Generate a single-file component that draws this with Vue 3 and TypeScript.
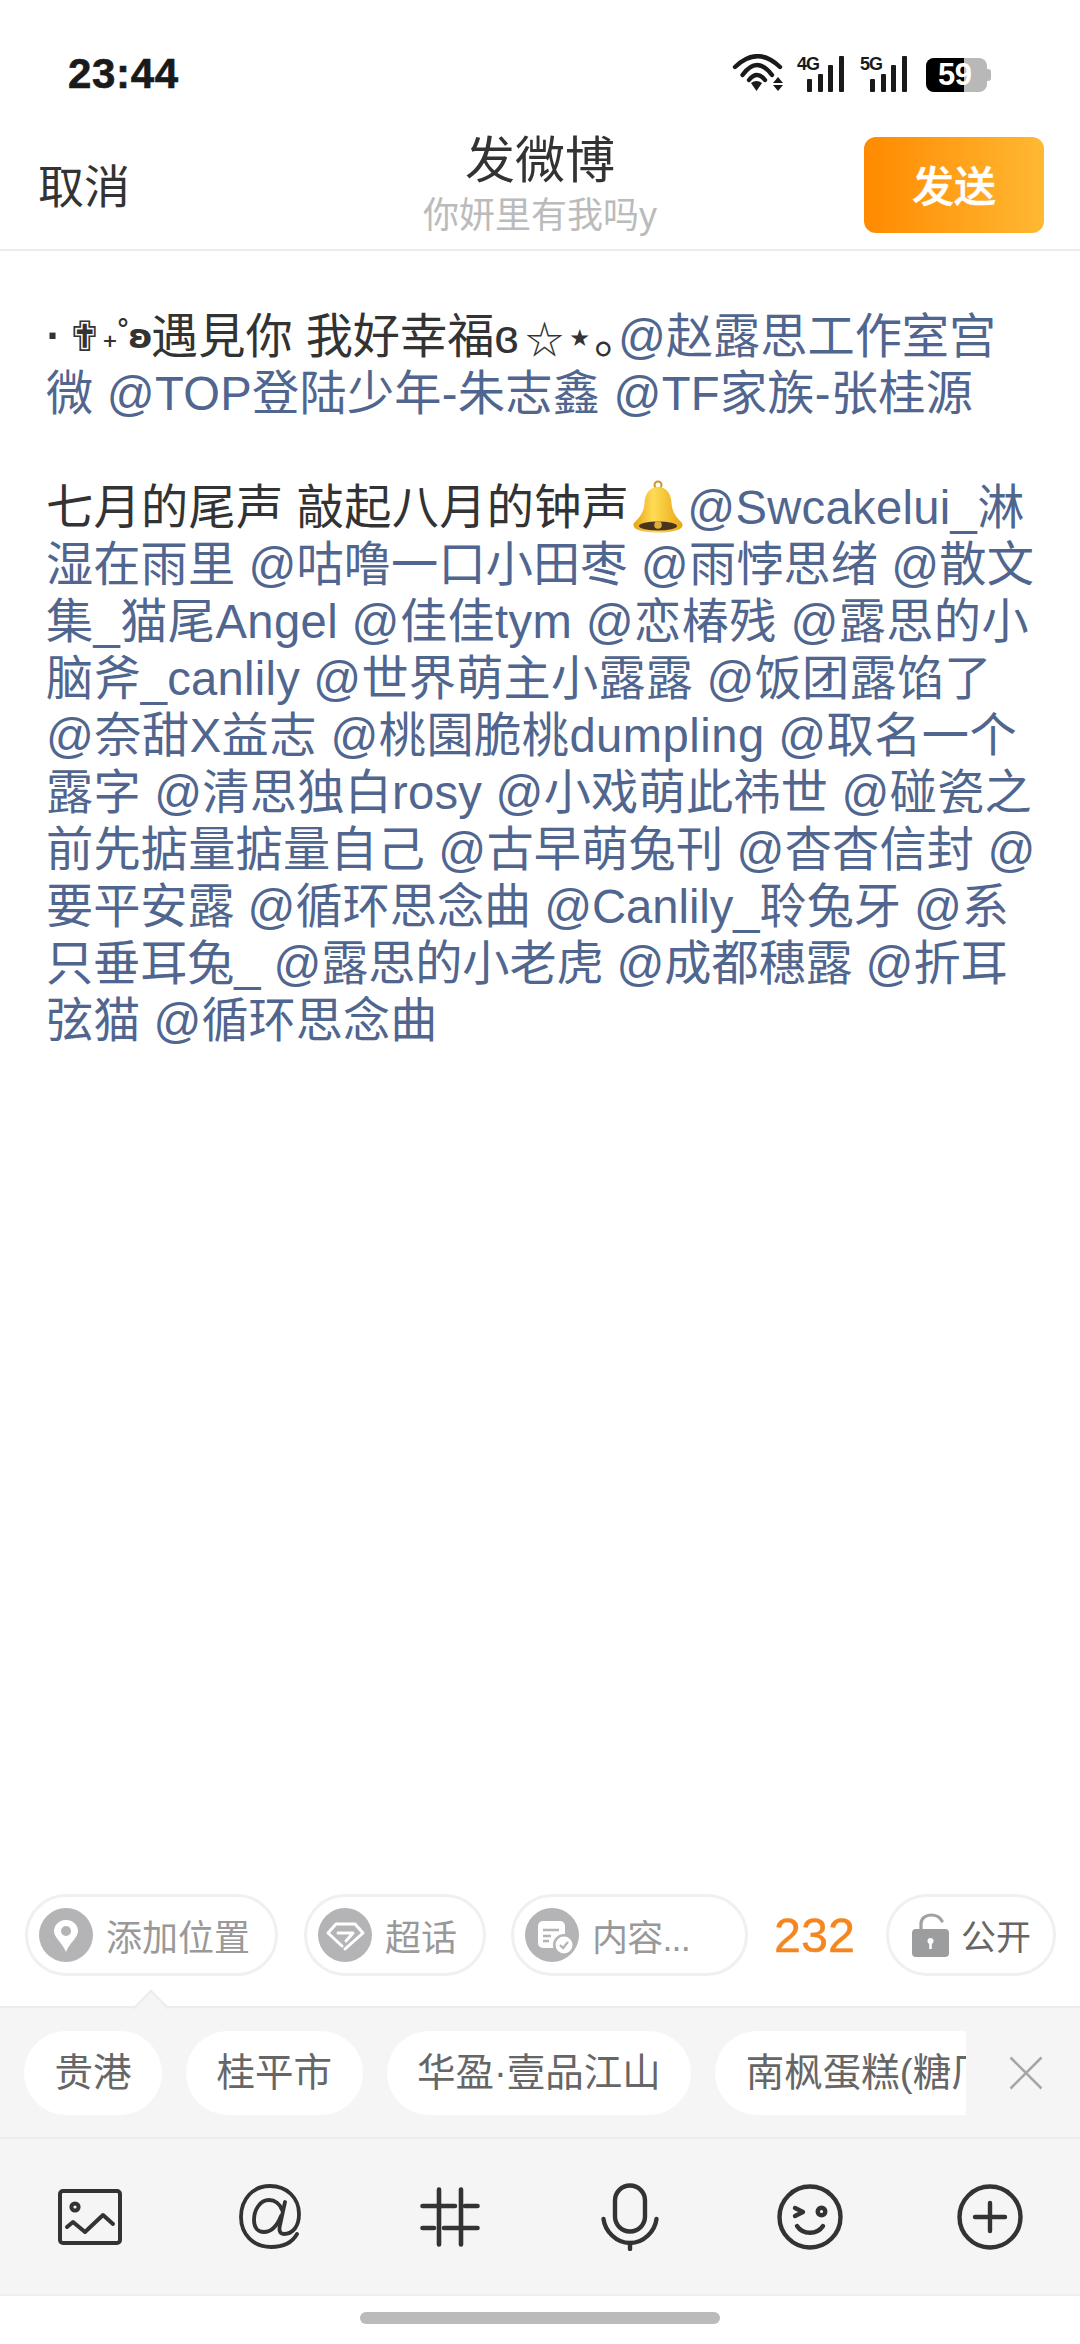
<script setup lang="ts">
type Seg = { text: string; link?: boolean; bell?: boolean };
type Line = { segs: Seg[]; track?: number };

const link = (text: string): Seg => ({ text, link: true });
const plain = (text: string): Seg => ({ text });

// the decorated opening of the post, each glyph has its own box
const deco = [
  { text: "·", cls: "d-dot" },
  { text: "✟", cls: "d-cross" },
  { text: "₊", cls: "d-plus" },
  { text: "˚", cls: "d-ring" },
  { text: "ʚ", cls: "d-wing" },
];

const lines: Line[] = [
  { segs: [plain("遇見你 我好幸福ɞ"), { text: "☆" }, plain("⋆｡"), link("@赵露思工作室宫")] },
  { segs: [link("微 @TOP登陆少年-朱志鑫 @TF家族-张桂源")], track: 0.27 },
  { segs: [] },
  { segs: [plain("七月的尾声 敲起八月的钟声"), { text: "", bell: true }, link("@Swcakelui_淋")], track: 0.3 },
  { segs: [link("湿在雨里 @咕噜一口小田枣 @雨悖思绪 @散文")], track: 0.12 },
  { segs: [link("集_猫尾Angel @佳佳tym @恋椿残 @露思的小")], track: 0.4 },
  { segs: [link("脑斧_canlily @世界萌主小露露 @饭团露馅了")], track: 0.22 },
  { segs: [link("@奈甜X益志 @桃園脆桃dumpling @取名一个")], track: 0.46 },
  { segs: [link("露字 @清思独白rosy @小戏萌此祎世 @碰瓷之")], track: 0.24 },
  { segs: [link("前先掂量掂量自己 @古早萌兔刊 @杳杳信封 @")], track: 0.19 },
  { segs: [link("要平安露 @循环思念曲 @Canlily_聆兔牙 @系")], track: -0.05 },
  { segs: [link("只垂耳兔_ @露思的小老虎 @成都穗露 @折耳")], track: -0.12 },
  { segs: [link("弦猫 @循环思念曲")] },
];

const chips = ["贵港", "桂平市", "华盈·壹品江山", "南枫蛋糕(糖厂店)"];
const signalBars = [13, 18, 27, 36];
</script>

<template>
  <div class="screen">
    <div class="status">
      <span class="clock">23:44</span>
      <div class="status-icons">
        <svg class="wifi" width="52" height="38" viewBox="0 0 52 38">
          <g fill="none" stroke="#1a1a1a" stroke-width="4.400" stroke-linecap="round">
            <path d="M3 13 Q25.500 -8.600 48 13" />
            <path d="M10.500 21 Q25 1 40 21" />
            <path d="M17 26 Q25 16 33 26" />
          </g>
          <path d="M19 29 L24.500 37 L30 29 Q24.500 25 19 29 Z" fill="#1a1a1a" />
          <path d="M41 29 L46 23 L51 29 Z M41 31 H51 L46 37 Z" fill="#1a1a1a" />
        </svg>
        <div class="signal">
          <span class="net">4G</span>
          <i v-for="h in signalBars" :key="h" :style="{ height: h + 'px' }" />
        </div>
        <div class="signal">
          <span class="net">5G</span>
          <i v-for="h in signalBars" :key="h" :style="{ height: h + 'px' }" />
        </div>
        <div class="battery">
          <div class="battery-fill" />
          <span class="battery-num">59</span>
          <div class="battery-nub" />
        </div>
      </div>
    </div>

    <header class="header">
      <span class="cancel">取消</span>
      <div class="title">
        <div class="title-main">发微博</div>
        <div class="title-sub">你妍里有我吗y</div>
      </div>
      <button class="send">发送</button>
    </header>

    <main class="body">
      <div
        v-for="(line, i) in lines"
        :key="i"
        class="line"
        :style="line.track ? { letterSpacing: line.track + 'px' } : undefined"
      >
        <template v-if="i === 0">
          <span v-for="d in deco" :key="d.cls" class="deco" :class="d.cls">{{ d.text }}</span>
        </template>
        <template v-for="(seg, j) in line.segs" :key="j">
          <svg v-if="seg.bell" class="bell" width="52" height="53" viewBox="0 0 52 53">
            <defs>
              <linearGradient id="bellGold" x1="0" y1="0" x2="1" y2="0">
                <stop offset="0" stop-color="#e6a414" />
                <stop offset="0.4" stop-color="#ffdb55" />
                <stop offset="1" stop-color="#e9a612" />
              </linearGradient>
            </defs>
            <circle cx="26" cy="5" r="3.500" fill="none" stroke="#c9962a" stroke-width="2" />
            <path d="M26 7 C17 7 13 14 12.500 23 C12 32 8 37 2 43 C0 47 4 50 10 51 C20 53 32 53 42 51 C48 50 52 47 50 43 C44 37 40 32 39.500 23 C39 14 35 7 26 7 Z" fill="url(#bellGold)" />
            <ellipse cx="26" cy="46" rx="19" ry="4.500" fill="#4a3420" />
            <circle cx="26" cy="45" r="3.800" fill="#dcae3f" />
          </svg>
          <span v-else :class="{ mention: seg.link, star: seg.text === '☆' }">{{ seg.text }}</span>
        </template>
      </div>
    </main>

    <div class="meta">
      <div class="pill pill-loc">
        <span class="dot">
          <svg width="54" height="54" viewBox="0 0 54 54">
            <path d="M27 12 C19 12 15 18 15 23 C15 30 23 34 27 44 C31 34 39 30 39 23 C39 18 35 12 27 12 Z" fill="#fff" />
            <circle cx="27" cy="23" r="5" fill="#b4b4b6" />
          </svg>
        </span>
        <span>添加位置</span>
      </div>
      <div class="pill pill-topic">
        <span class="dot">
          <svg width="54" height="54" viewBox="0 0 54 54" fill="none" stroke="#fff" stroke-width="3" stroke-linejoin="round" stroke-linecap="round">
            <path d="M27 41 L45 25 L37 16 H18 L10 25 L24 38" />
            <path d="M20 25 H35 L28 33" />
          </svg>
        </span>
        <span>超话</span>
      </div>
      <div class="pill pill-content">
        <span class="dot">
          <svg width="54" height="54" viewBox="0 0 54 54">
            <rect x="13" y="13" width="27" height="27" rx="5" fill="#fff" />
            <path d="M18 22 H34 M18 28 H26 M18 33 H24" stroke="#b4b4b6" stroke-width="2.500" />
            <circle cx="39" cy="37" r="11" fill="#b4b4b6" />
            <circle cx="39" cy="37" r="8.500" fill="#fff" />
            <path d="M35 37 L38 40 L43 34" fill="none" stroke="#b4b4b6" stroke-width="2.200" />
          </svg>
        </span>
        <span class="content-label">内容...</span>
      </div>
      <span class="count">232</span>
      <div class="pill pill-public">
        <svg width="38" height="44" viewBox="0 0 38 44">
          <path d="M9 17 V11 C9 5 14 2 19 2 C24 2 28 4 30 8" fill="none" stroke="#a0a1a3" stroke-width="3.200" stroke-linecap="round" />
          <rect x="0" y="16" width="37" height="28" rx="4" fill="#9c9d9f" />
          <circle cx="18.500" cy="28" r="3" fill="#fff" />
          <rect x="17.200" y="29" width="2.600" height="7" fill="#fff" />
        </svg>
        <span>公开</span>
      </div>
    </div>

    <div class="suggest">
      <div class="caret" />
      <div class="chips">
        <span v-for="chip in chips" :key="chip" class="chip">{{ chip }}</span>
      </div>
      <svg class="close" width="34" height="34" viewBox="0 0 34 34">
        <path d="M1.500 1.500 L32.500 32.500 M32.500 1.500 L1.500 32.500" stroke="#a6a6a6" stroke-width="2.600" />
      </svg>
    </div>

    <nav class="toolbar">
      <div class="tool">
        <svg width="64" height="56" viewBox="0 0 64 56" fill="none" stroke="#333" stroke-width="4" stroke-linecap="round" stroke-linejoin="round">
          <rect x="2" y="2" width="60" height="52" rx="3" />
          <circle cx="17" cy="18" r="3.600" />
          <path d="M9 38 L15 33 L27 43 L45 26 L55 35" />
        </svg>
      </div>
      <div class="tool">
        <svg width="64" height="66" viewBox="0 0 64 66" fill="none" stroke="#333" stroke-width="3.800" stroke-linecap="round" stroke-linejoin="round">
          <path d="M59 50 C54 59 45 63 33 63 C15 63 3 50 3 33 C3 15 15 2 32 2 C49 2 61 14 61 30 C61 42 55 50 46 50 C41 50 41 45 42 41 L47 18" />
          <path d="M44 26 C42 20 37 16 31 16 C22 16 16 26 16 36 C16 44 20 48 26 48 C33 48 39 42 43 32" />
        </svg>
      </div>
      <div class="tool">
        <svg width="60" height="60" viewBox="0 0 60 60" fill="none" stroke="#333" stroke-width="4.600" stroke-linecap="round">
          <path d="M19 2.500 V57.500 M41 2.500 V57.500" />
          <path d="M2.500 19 H35 M45 19 H57.500 M2.500 41 H14 M24 41 H57.500" />
        </svg>
      </div>
      <div class="tool">
        <svg width="58" height="68" viewBox="0 0 58 68" fill="none" stroke="#333" stroke-width="4.400" stroke-linecap="round">
          <rect x="14" y="2.500" width="30" height="46" rx="15" />
          <path d="M2.500 36 C4 48 15 60 29 60 C43 60 54 48 55.500 36" />
          <path d="M29 60 V66" />
        </svg>
      </div>
      <div class="tool">
        <svg width="66" height="66" viewBox="0 0 66 66" fill="none" stroke="#333" stroke-width="4.400" stroke-linecap="round" stroke-linejoin="round">
          <circle cx="33" cy="33" r="30.500" />
          <path d="M18 24 L26 28 L18 32" />
          <circle cx="44.500" cy="27.500" r="3.800" />
          <path d="M20 42 C26 51 40 51 46 42" />
        </svg>
      </div>
      <div class="tool">
        <svg width="66" height="66" viewBox="0 0 66 66" fill="none" stroke="#333" stroke-width="4.400" stroke-linecap="round">
          <circle cx="33" cy="33" r="30.500" />
          <path d="M33 19 V47 M18 33 H48" />
        </svg>
      </div>
    </nav>

    <div class="home">
      <div class="home-bar" />
    </div>
  </div>
</template>

<style>
html,
body {
  margin: 0;
  background: #fff;
}
</style>

<style scoped>
.screen {
  width: 1080px;
  height: 2344px;
  display: flex;
  flex-direction: column;
  background: #fff;
  font-family: "Liberation Sans", "Noto Sans CJK SC", sans-serif;
  overflow: hidden;
}

.status {
  height: 125px;
  padding: 0 93px 0 68px;
  box-sizing: border-box;
  display: flex;
  justify-content: space-between;
  align-items: flex-start;
}
.clock {
  margin-top: 50px;
  font-size: 42px;
  line-height: 48px;
  font-weight: 700;
  letter-spacing: 0.700px;
  -webkit-text-stroke: 0.600px #1a1a1a;
  color: #1a1a1a;
}
.status-icons {
  margin-top: 54px;
  display: flex;
  align-items: flex-start;
}
.wifi {
  display: block;
}
.signal {
  position: relative;
  box-sizing: border-box;
  width: 48px;
  height: 38px;
  margin-left: 13px;
  padding-left: 10px;
  display: flex;
  align-items: flex-end;
  gap: 5.600px;
}
.signal + .signal {
  margin-left: 15px;
}
.signal i {
  display: block;
  flex: none;
  width: 5px;
  background: #1a1a1a;
  border-radius: 1px;
}
.net {
  position: absolute;
  left: 0;
  top: 2px;
  font-size: 18px;
  line-height: 16px;
  font-weight: 700;
  color: #1a1a1a;
  letter-spacing: -1px;
}
.battery {
  position: relative;
  width: 61px;
  height: 34px;
  margin-left: 18px;
  margin-top: 4px;
  background: #b8b8b8;
  border-radius: 8px;
}
.battery-fill {
  position: absolute;
  left: 0;
  top: 0;
  bottom: 0;
  width: 38px;
  background: #000;
  border-radius: 8px 0 0 8px;
}
.battery-num {
  position: absolute;
  left: 12px;
  top: 1px;
  font-size: 31px;
  line-height: 32px;
  font-weight: 700;
  color: #fff;
  letter-spacing: -0.500px;
}
.battery-nub {
  position: absolute;
  right: -4px;
  top: 11px;
  width: 4px;
  height: 12px;
  background: #b8b8b8;
  border-radius: 0 3px 3px 0;
}

.header {
  position: relative;
  height: 126px;
  box-sizing: border-box;
  padding: 12px 36px 0 38px;
  display: flex;
  justify-content: space-between;
  align-items: flex-start;
  border-bottom: 2px solid #ececec;
}
.cancel {
  margin-top: 26px;
  font-size: 46px;
  line-height: 48px;
  color: #333;
}
.title {
  position: absolute;
  left: 0;
  right: 0;
  top: 9px;
  text-align: center;
}
.title-main {
  font-size: 50px;
  line-height: 54px;
  color: #333;
}
.title-sub {
  margin-top: 7px;
  font-size: 36px;
  line-height: 42px;
  color: #bbb;
}
.send {
  position: relative;
  width: 180px;
  height: 96px;
  border: none;
  border-radius: 12px;
  background: linear-gradient(90deg, #ff8a00, #ffb833);
  color: #fff;
  font-family: inherit;
  font-size: 42px;
  font-weight: 500;
  -webkit-text-stroke: 0.500px #fff;
  padding: 0 0 4px;
}

.body {
  flex: 1;
  padding: 57px 0 0 46px;
  font-size: 47.200px;
  color: #333;
}
.line {
  height: 57px;
  line-height: 57px;
  white-space: pre;
}
.deco {
  display: inline-block;
  line-height: 57px;
  vertical-align: top;
  font-family: "DejaVu Sans", sans-serif;
}
.d-dot {
  width: 21px;
  font-size: 34px;
  font-weight: 700;
}
.d-cross {
  width: 35px;
  font-size: 42px;
  font-weight: 700;
  color: #333;
}
.d-plus {
  width: 13px;
  font-size: 30px;
  font-weight: 700;
}
.d-ring {
  width: 13px;
  font-size: 32px;
}
.d-wing {
  width: 23px;
  font-size: 34px;
  font-weight: 700;
}
.star {
  font-size: 38px;
  margin: 0 2px 0 7px;
}
.mention {
  color: #50668f;
}
.bell {
  margin: 0 3px 0 3px;
  vertical-align: -9px;
}

.meta {
  height: 112px;
  box-sizing: border-box;
  padding: 0 24px 31px 25px;
  display: flex;
  align-items: center;
}
.pill {
  height: 82px;
  box-sizing: border-box;
  border: 3px solid #f0f0f0;
  border-radius: 41px;
  display: flex;
  align-items: center;
  gap: 13px;
  font-size: 36px;
  color: #999;
  padding-left: 11px;
}
.pill-loc {
  width: 253px;
}
.pill-topic {
  width: 182px;
  margin-left: 26px;
}
.pill-content {
  width: 237px;
  margin-left: 25px;
}
.content-label {
  letter-spacing: -0.800px;
}
.count {
  margin-left: 26px;
  width: 112px;
  font-size: 48.500px;
  -webkit-text-stroke: 0.400px #f5861f;
  color: #f5861f;
}
.pill-public {
  width: 170px;
  padding-left: 23px;
  gap: 11px;
  font-size: 35px;
  color: #666;
}
.dot {
  width: 54px;
  height: 54px;
  flex: none;
  border-radius: 50%;
  background: #b4b4b6;
  overflow: hidden;
}
.dot svg,
.pill-public svg {
  display: block;
  flex: none;
}

.suggest {
  position: relative;
  height: 133px;
  box-sizing: border-box;
  background: #f5f5f5;
  border-top: 2px solid #ececec;
  border-bottom: 2px solid #ececec;
  padding: 23px 37px 0 24px;
  display: flex;
  justify-content: space-between;
}
.caret {
  position: absolute;
  left: 138px;
  top: -13px;
  width: 24px;
  height: 24px;
  background: #f5f5f5;
  border-left: 2px solid #ececec;
  border-top: 2px solid #ececec;
  transform: rotate(45deg);
}
.chips {
  width: 942px;
  overflow: hidden;
  display: flex;
  gap: 24px;
  height: 84px;
}
.chip {
  flex: none;
  height: 84px;
  line-height: 84px;
  padding: 0 30.500px;
  border-radius: 42px;
  background: #fff;
  font-size: 38.500px;
  color: #666;
}
.close {
  margin-top: 25px;
}

.toolbar {
  height: 157px;
  box-sizing: border-box;
  background: #f5f5f5;
  border-bottom: 2px solid #efefef;
  display: grid;
  grid-template-columns: repeat(6, 1fr);
  align-items: center;
}
.tool {
  display: flex;
  justify-content: center;
}

.home {
  flex: none;
  height: 48px;
  box-sizing: border-box;
  padding-top: 16px;
  display: flex;
  justify-content: center;
}
.home-bar {
  width: 360px;
  height: 12px;
  border-radius: 6px;
  background: #bbb;
}
</style>
